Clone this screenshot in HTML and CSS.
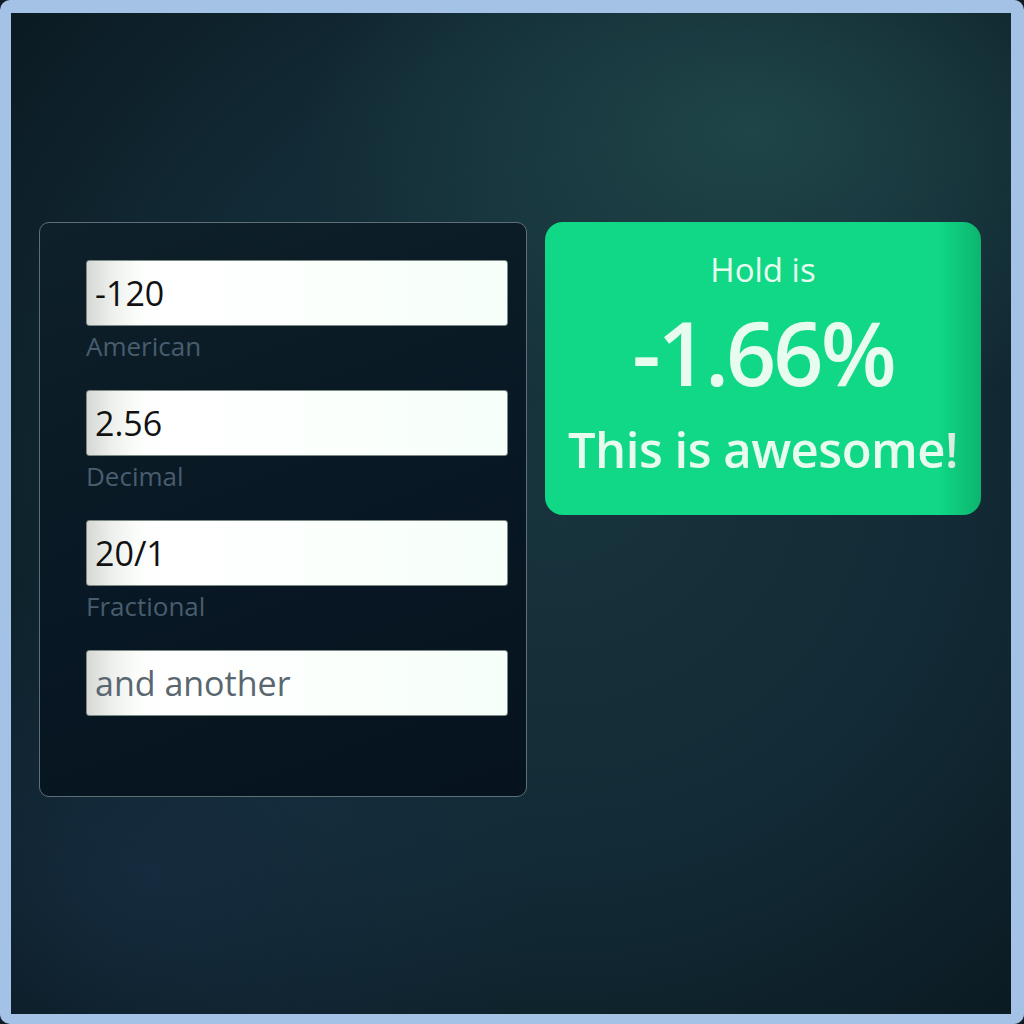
FILE: index.html
```html
<!DOCTYPE html>
<html lang="en">
<head>
<meta charset="utf-8">
<title>Hold calculator</title>
<link rel="stylesheet" href="styles.css">
</head>
<body>
<div class="frame">
  <div class="stage">
    <form class="form-card">
      <div class="field">
        <input class="odds-input" type="text" value="-120">
        <label class="field-label">American</label>
      </div>
      <div class="field">
        <input class="odds-input" type="text" value="2.56">
        <label class="field-label">Decimal</label>
      </div>
      <div class="field">
        <input class="odds-input" type="text" value="20/1">
        <label class="field-label">Fractional</label>
      </div>
      <div class="field">
        <input class="odds-input" type="text" placeholder="and another">
      </div>
    </form>
    <div class="result-card">
      <div class="result-title">Hold is</div>
      <div class="result-value">-1.66%</div>
      <div class="result-message">This is awesome!</div>
    </div>
  </div>
</div>
</body>
</html>
```
FILE: styles.css
```css
html, body {
  margin: 0;
  padding: 0;
  background: #0e1c24;
}
body {
  font-family: "Open Sans", "Noto Sans", sans-serif;
}
.frame {
  width: 1024px;
  height: 1024px;
  box-sizing: border-box;
  border-style: solid;
  border-color: #a4c2e6;
  border-width: 13px 13px 10px 11px;
  border-radius: 10px;
  overflow: hidden;
}
.stage {
  width: 100%;
  height: 100%;
  box-sizing: border-box;
  padding: 209px 28px 0 28px;
  display: flex;
  align-items: flex-start;
  gap: 18px;
  background:
    radial-gradient(ellipse 45% 30% at 74% 12%, rgba(32, 72, 74, 0.9) 0%, rgba(32, 72, 74, 0) 100%),
    radial-gradient(ellipse 40% 30% at 14% 86%, rgba(24, 48, 70, 0.7) 0%, rgba(24, 48, 70, 0) 100%),
    radial-gradient(ellipse 75% 75% at 55% 45%, #18343d 0%, #122a35 55%, #0a1820 100%);
}
.form-card {
  width: 488px;
  height: 575px;
  box-sizing: border-box;
  margin: 0;
  padding: 37px 18px 0 46px;
  border: 1px solid #5f6f78;
  border-radius: 10px;
  background: linear-gradient(160deg, #0e2029 0%, #081824 50%, #06131e 100%);
  display: flex;
  flex-direction: column;
  gap: 29px;
}
.field {
  display: flex;
  flex-direction: column;
}
.odds-input {
  display: block;
  width: 100%;
  height: 66px;
  box-sizing: border-box;
  margin: 0;
  padding: 0 8px;
  border: 1px solid #7d8a84;
  border-radius: 3px;
  background: linear-gradient(90deg, #d6d8d6 0%, #eef0ee 6%, #fbfdfb 12%, #ffffff 18%, #f6fff9 100%);
  font-family: "Open Sans", "Noto Sans", sans-serif;
  font-size: 34px;
  color: #111111;
  outline: none;
}
.odds-input::placeholder {
  color: #5a6670;
  opacity: 1;
}
.field-label {
  display: block;
  height: 35px;
  line-height: 40px;
  font-size: 26px;
  color: #485d6e;
}
.result-card {
  position: relative;
  width: 436px;
  height: 293px;
  box-sizing: border-box;
  padding-top: 24px;
  border-radius: 18px;
  background: #10d886;
  color: #e8fbef;
  text-align: center;
  overflow: hidden;
}
.result-card::after {
  content: "";
  position: absolute;
  inset: 0;
  background: linear-gradient(90deg, rgba(0, 40, 20, 0) 0%, rgba(0, 40, 20, 0) 90%, rgba(0, 40, 20, 0.2) 100%);
  pointer-events: none;
}
.result-title {
  font-size: 33px;
  line-height: 48px;
}
.result-value {
  margin-top: 13px;
  font-size: 88px;
  line-height: 90px;
  font-weight: 600;
  letter-spacing: -3px;
}
.result-message {
  margin-top: 22px;
  font-size: 49px;
  line-height: 61px;
  font-weight: 600;
  letter-spacing: -0.5px;
}
```
